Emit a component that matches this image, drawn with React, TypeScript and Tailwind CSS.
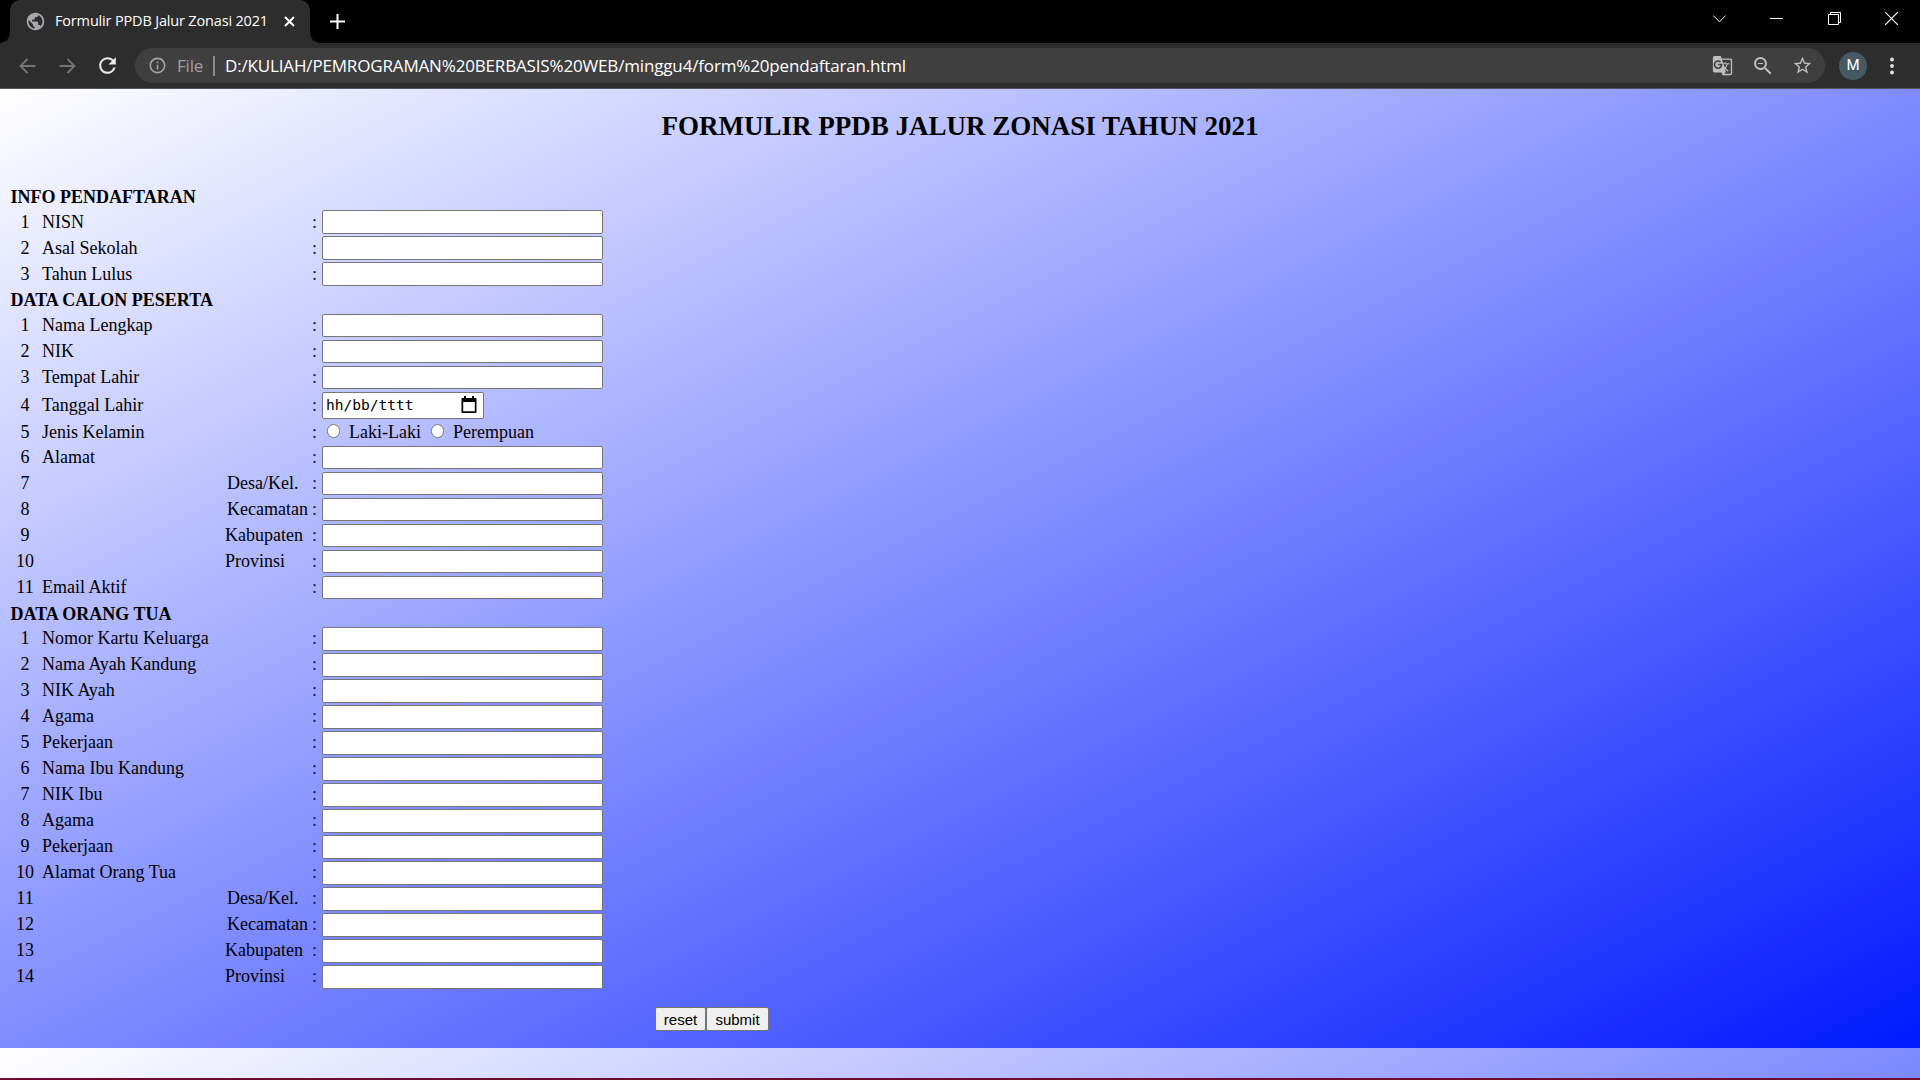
import React from "react";
import { MdPublic, MdRefresh, MdInfoOutline, MdGTranslate, MdZoomOut, MdStarBorder } from "react-icons/md";

type Row = { label?: string; sub?: string; indent?: string; kind?: "date" | "radio" };

const info: Row[] = [{ label: "NISN" }, { label: "Asal Sekolah" }, { label: "Tahun Lulus" }];

const region: Row[] = [
  { sub: "Desa/Kel.", indent: "pl-[2px]" },
  { sub: "Kecamatan", indent: "pl-[2px]" },
  { sub: "Kabupaten" },
  { sub: "Provinsi" },
];

const peserta: Row[] = [
  { label: "Nama Lengkap" },
  { label: "NIK" },
  { label: "Tempat Lahir" },
  { label: "Tanggal Lahir", kind: "date" },
  { label: "Jenis Kelamin", kind: "radio" },
  { label: "Alamat" },
  ...region,
  { label: "Email Aktif" },
];

const orangTua: Row[] = [
  { label: "Nomor Kartu Keluarga" },
  { label: "Nama Ayah Kandung" },
  { label: "NIK Ayah" },
  { label: "Agama" },
  { label: "Pekerjaan" },
  { label: "Nama Ibu Kandung" },
  { label: "NIK Ibu" },
  { label: "Agama" },
  { label: "Pekerjaan" },
  { label: "Alamat Orang Tua" },
  ...region,
];

function DateField() {
  return (
    <div className="flex h-[27px] w-[162px] items-center justify-between rounded-[2px] border border-[#767676] bg-white pl-[3px] pr-[6px]">
      <span className="font-['DejaVu_Sans_Mono',monospace] text-[14.6px] leading-none tracking-[-0.05px] text-black">
        hh/bb/tttt
      </span>
      <svg width="16" height="18" viewBox="0 0 16 18" className="mb-[2px]">
        <path d="M3 0h2v2h6V0h2v2h1.500q1 0 1 1v13q0 1-1 1h-13q-1 0-1-1V3q0-1 1-1H3zM2.200 6v9.300h11.600V6z" fill="#000" fillRule="evenodd" />
      </svg>
    </div>
  );
}

function RadioField() {
  return (
    <div className="flex h-[22px] items-center pl-[5px]">
      <span className="mb-[2px] h-[14px] w-[13px] rounded-full border border-[#767676] bg-white" />
      <span className="ml-[9px]">Laki-Laki</span>
      <span className="mb-[2px] ml-[10px] h-[14px] w-[13px] rounded-full border border-[#767676] bg-white" />
      <span className="ml-[9px]">Perempuan</span>
    </div>
  );
}

function FormRow({ n, row, line, field }: { n: number; row: Row; line: string; field: string }) {
  const height = row.kind === "date" ? "h-[29px]" : row.kind === "radio" ? "h-[25px]" : "h-[26px]";
  return (
    <div className={`flex ${height}`}>
      <div className={`flex items-center ${row.kind === "date" ? "h-[26px]" : line}`}>
        <div className="w-[30px] text-center">{n}</div>
        <div className="w-[185px] whitespace-nowrap pl-[2px]">{row.label}</div>
        <div className={`w-[87px] whitespace-nowrap ${row.indent ?? ""}`}>{row.sub}</div>
        <div className="w-[10px] text-[#20204a]">:</div>
      </div>
      {row.kind === "date" ? (
        <DateField />
      ) : row.kind === "radio" ? (
        <RadioField />
      ) : (
        <input aria-label={row.label ?? row.sub} className={`w-[281px] rounded-[2px] border border-[#767676] bg-white px-1 ${field}`} />
      )}
    </div>
  );
}

type SectionProps = { title: string; rows: Row[]; head: string; line: string; field: string };

function Section({ title, rows, head, line, field }: SectionProps) {
  return (
    <section>
      <h3 className={`pl-[0.5px] font-bold ${head}`}>{title}</h3>
      {rows.map((r, i) => (
        <FormRow key={i} n={i + 1} row={r} line={line} field={field} />
      ))}
    </section>
  );
}

function TabStrip() {
  return (
    <div className="flex h-[43px] bg-black">
      <div className="flex w-[10px] items-end bg-black">
        <div className="h-[10px] w-[10px] bg-[#2d2d2d]">
          <div className="h-full w-full rounded-br-[10px] bg-black" />
        </div>
      </div>
      <div className="flex w-[300px] items-center rounded-t-[10px] bg-[#2d2d2d] pb-[1px] pl-[15px]">
        <MdPublic className="h-[21px] w-[21px] shrink-0 text-[#a5a9ad]" />
        <span className="ml-[9px] w-[215px] whitespace-nowrap text-[14.5px] tracking-[-0.17px] text-white">
          Formulir PPDB Jalur Zonasi 2021
        </span>
        <svg className="ml-[14px]" width="11" height="11" viewBox="0 0 11 11" stroke="#fff" strokeWidth="2">
          <path d="M1 1l9 9M10 1l-9 9" />
        </svg>
      </div>
      <div className="flex w-[10px] items-end bg-black">
        <div className="h-[10px] w-[10px] bg-[#2d2d2d]">
          <div className="h-full w-full rounded-bl-[10px] bg-black" />
        </div>
      </div>
      <svg className="ml-[10px] mt-[14px]" width="15" height="15" viewBox="0 0 15 15" stroke="#fff" strokeWidth="2">
        <path d="M7.500 0v15M0 7.500h15" />
      </svg>
      <div className="ml-auto mr-[22px] flex items-center gap-[44.3px] pb-[6px]">
        <svg width="13" height="8" viewBox="0 0 13 8" fill="none" stroke="#fff" strokeWidth="1">
          <path d="M.3.500l6.200 6.300L12.700.500" />
        </svg>
        <svg width="13" height="13" viewBox="0 0 13 13" stroke="#fff">
          <path d="M0 6.500h13" />
        </svg>
        <svg width="13" height="13" viewBox="0 0 13 13" fill="none" stroke="#fff">
          <path d="M.5 2.500h10v10H.5zM2.500 2.500v-2h10v10h-2" />
        </svg>
        <svg width="13" height="13" viewBox="0 0 13 13" stroke="#fff" strokeWidth="1.200">
          <path d="M0 0l13 13M13 0L0 13" />
        </svg>
      </div>
    </div>
  );
}

function Toolbar() {
  return (
    <div className="flex h-[46px] items-center border-b border-[#52535c] bg-[#2d2d2d]">
      <svg className="ml-[19px]" width="17" height="16" viewBox="0 0 17 16" fill="none" stroke="#757575" strokeWidth="1.800">
        <path d="M16.500 8H1.500M8.500 1L1.500 8l7 7" />
      </svg>
      <svg className="ml-[23px]" width="17" height="16" viewBox="0 0 17 16" fill="none" stroke="#757575" strokeWidth="1.800">
        <path d="M.5 8h15M8.500 1l7 7-7 7" />
      </svg>
      <MdRefresh className="ml-[19px] h-[25px] w-[25px] text-[#e8e8e8]" />
      <div className="ml-[15px] flex h-[35px] w-[1690px] items-center rounded-full bg-[#3f3f3f] pl-[13px] pr-[12px]">
        <MdInfoOutline className="h-[19px] w-[19px] text-[#a4a4a4]" />
        <span className="ml-[10px] w-[29px] text-[17px] tracking-[-0.2px] text-[#a0a0a0]">File</span>
        <span className="ml-[7px] h-[20px] w-[2px] bg-[#8b8b8b]" />
        <span className="ml-[10px] whitespace-nowrap text-[17px] tracking-[-0.16px] text-white">
          D:/KULIAH/PEMROGRAMAN%20BERBASIS%20WEB/minggu4/form%20pendaftaran.html
        </span>
        <div className="ml-auto flex items-center text-[#bebebe]">
          <MdGTranslate className="h-[21px] w-[21px]" />
          <MdZoomOut className="ml-[18px] h-[24px] w-[24px]" />
          <MdStarBorder className="ml-[17px] h-[21px] w-[21px]" />
        </div>
      </div>
      <div className="ml-[14px] flex h-[28px] w-[28px] items-center justify-center rounded-full bg-[#455a64] font-[Roboto,sans-serif] text-[15px] text-white">
        M
      </div>
      <svg className="ml-[21px]" width="8" height="18" viewBox="0 0 8 18" fill="#e4e4e4">
        <circle cx="4" cy="2.500" r="1.900" />
        <circle cx="4" cy="9" r="1.900" />
        <circle cx="4" cy="15.500" r="1.900" />
      </svg>
    </div>
  );
}

export default function App() {
  return (
    <div className="flex h-[1080px] w-[1920px] flex-col overflow-hidden bg-black">
      <header className="font-['Open_Sans','Noto_Sans',sans-serif]">
        <TabStrip />
        <Toolbar />
      </header>
      <main className="h-[959px] bg-linear-to-br/srgb from-white to-[#0019ff] px-[10px] font-['Liberation_Serif',serif] text-[18px] leading-[22px] text-black">
        <h2 className="pt-[20px] text-center text-[27px] font-bold leading-[34px]">FORMULIR PPDB JALUR ZONASI TAHUN 2021</h2>
        <form className="pt-[43px]">
          <Section title="INFO PENDAFTARAN" rows={info} head="h-[24px]" line="h-[24px]" field="h-[24px]" />
          <Section title="DATA CALON PESERTA" rows={peserta} head="h-[26px] leading-[24px]" line="h-[22px]" field="h-[23px]" />
          <Section title="DATA ORANG TUA" rows={orangTua} head="h-[25px] leading-[24px]" line="h-[22px]" field="h-[24px]" />
          <div className="flex pl-[645px] pt-[16px] font-['Liberation_Sans',Arial,sans-serif] text-[15px] leading-none">
            <button type="reset" className="h-[24px] w-[51px] rounded-[2px] border border-[#767676] bg-[#efefef]">reset</button>
            <button type="submit" className="h-[24px] w-[63px] rounded-[2px] border border-[#767676] bg-[#efefef]">submit</button>
          </div>
        </form>
      </main>
      <div className="h-[30px] overflow-hidden">
        <div className="h-[959px] bg-linear-to-br/srgb from-white to-[#0019ff]" />
      </div>
      <div className="h-[2px] bg-[#6d0a2e]" />
    </div>
  );
}
